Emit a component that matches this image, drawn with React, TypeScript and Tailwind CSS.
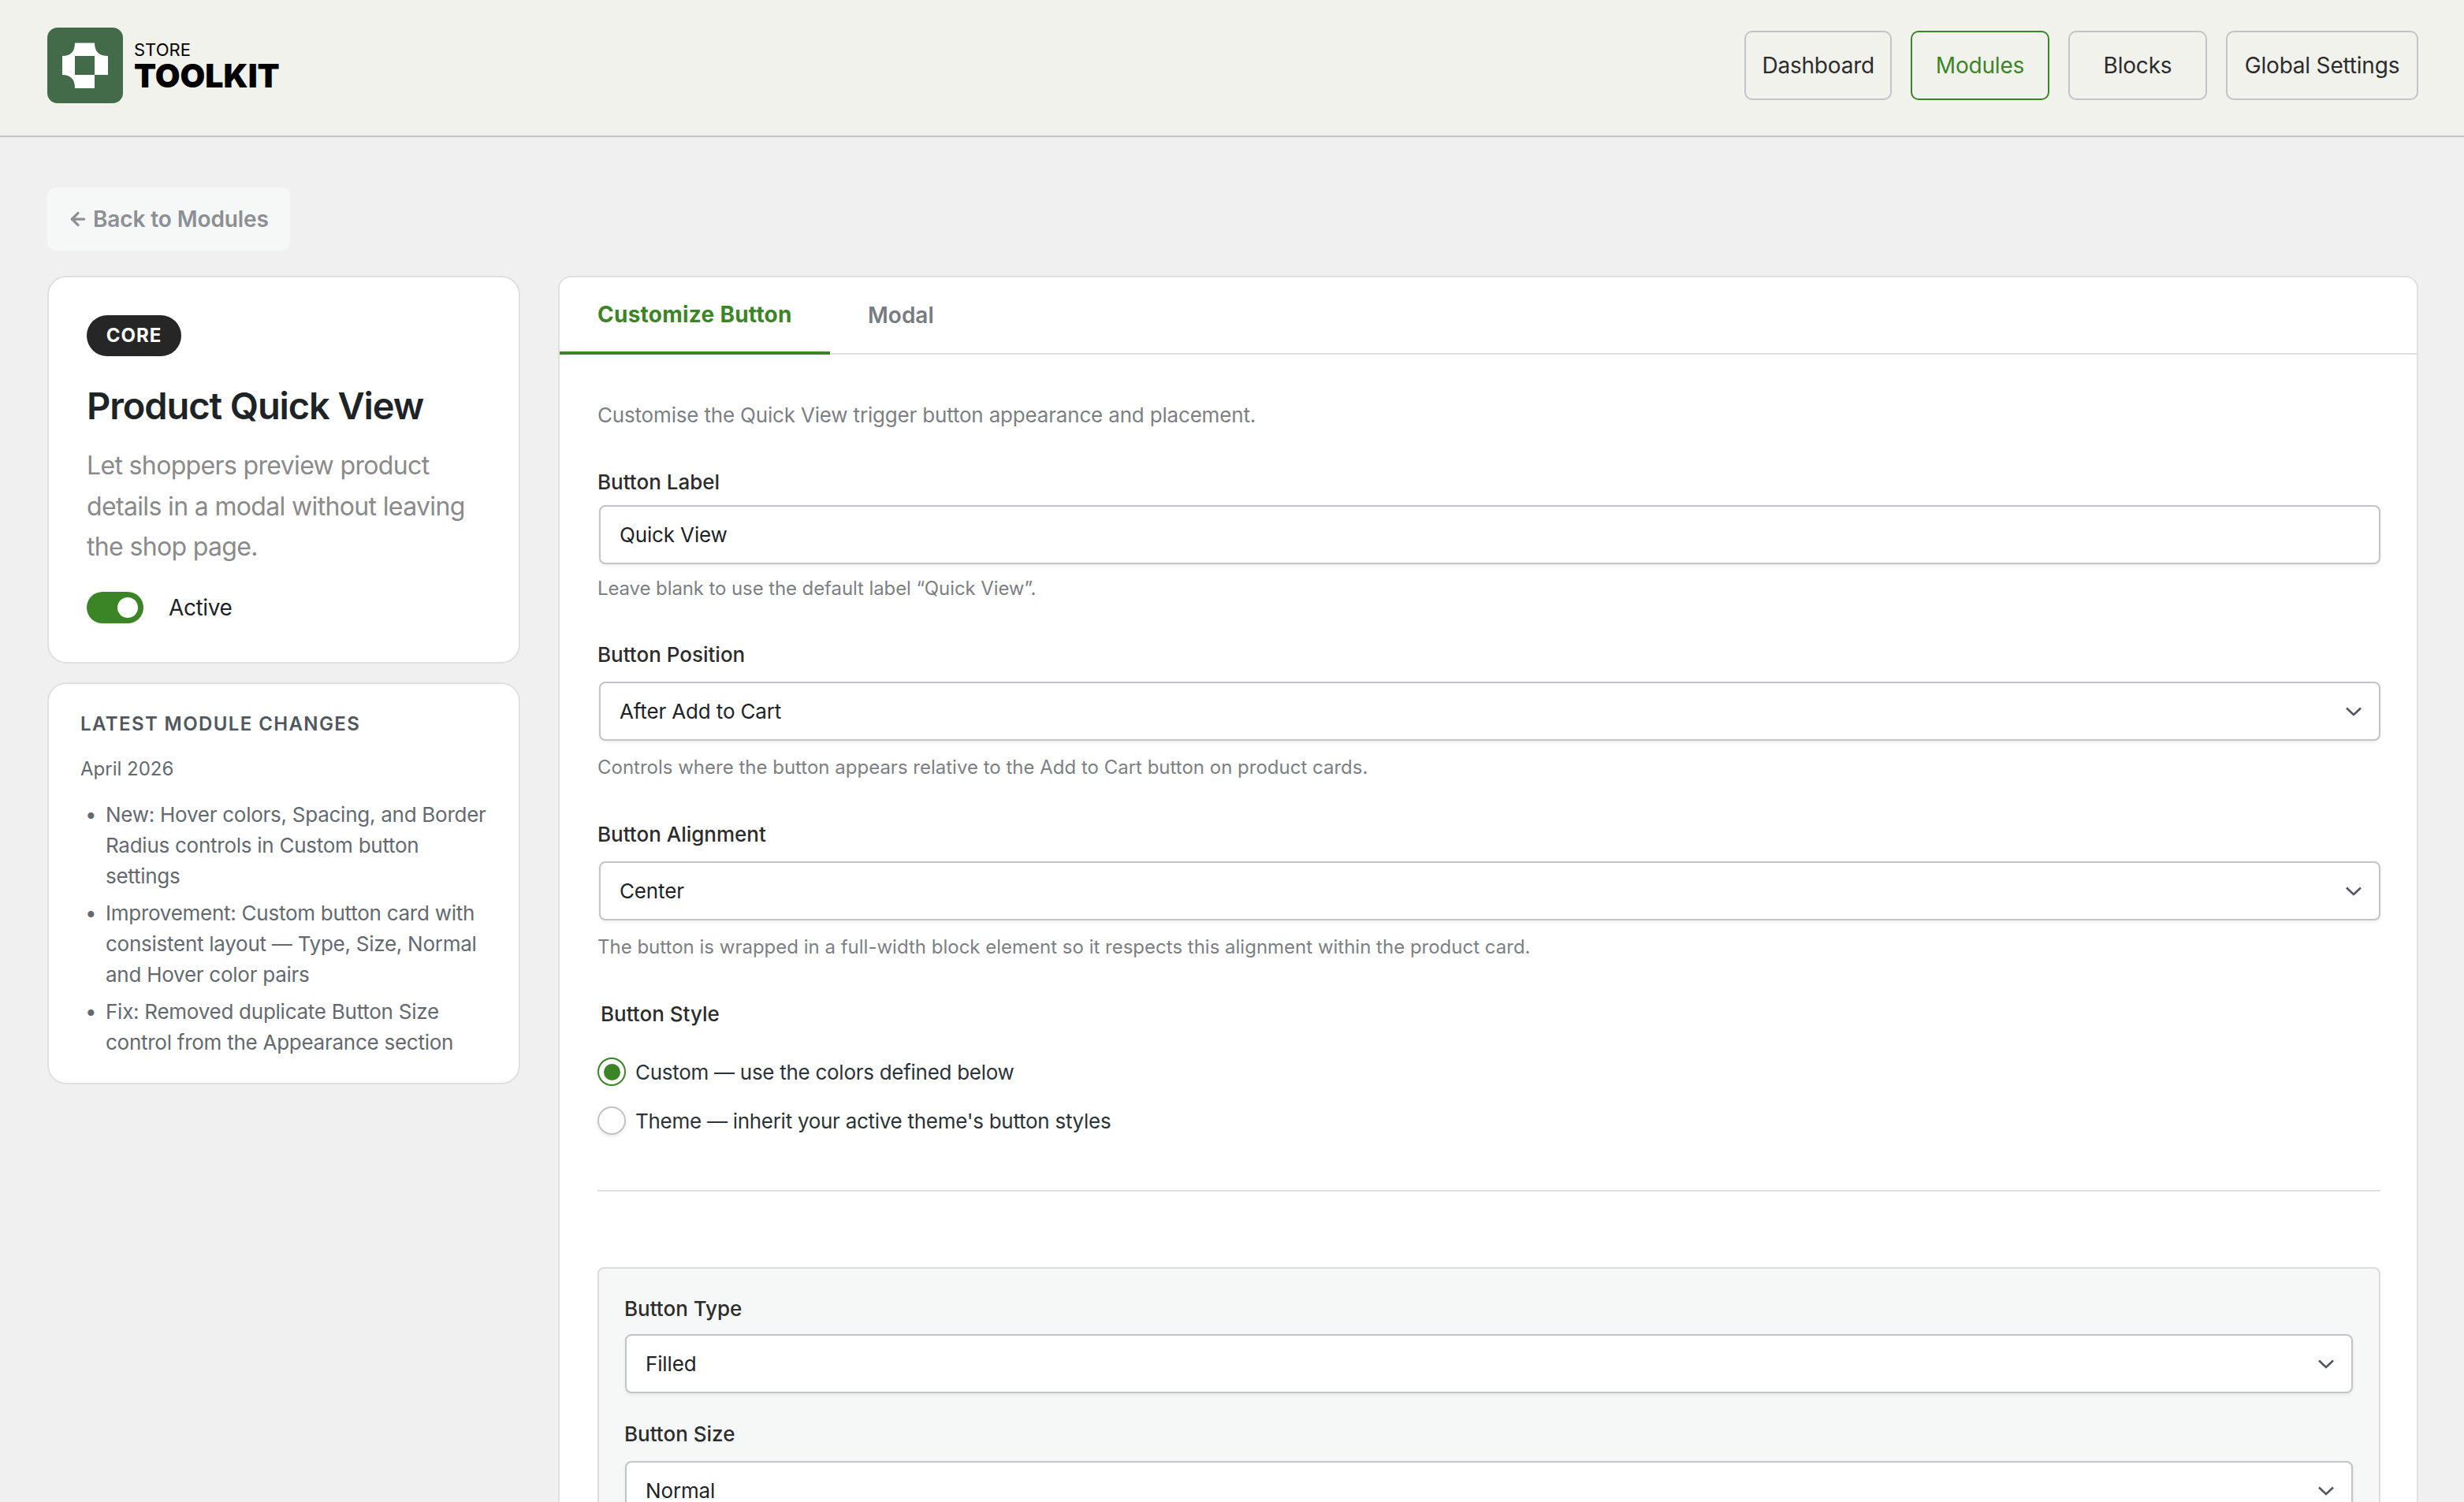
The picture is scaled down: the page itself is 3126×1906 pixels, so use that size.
import { ArrowLeft } from "lucide-react";

function LogoMark() {
  return (
    <svg width="96" height="96" viewBox="0 0 96 96" className="shrink-0">
      <rect width="96" height="96" rx="13" fill="#436b49" />
      <path
        fillRule="evenodd"
        fill="#fff"
        d="M35 19.5H60Q60 36 77 36V60H60V77H35Q35 60 19 60V36Q35 36 35 19.5ZM35 36V60H60V36Z"
      />
    </svg>
  );
}

function Chevron() {
  return (
    <svg width="20" height="12" viewBox="0 0 20 12" fill="none" className="shrink-0">
      <path d="M1 1.5L10 10L19 1.5" stroke="#50575e" strokeWidth="2.6" />
    </svg>
  );
}

function NavButton({ label, active, wide }: { label: string; active?: boolean; wide?: boolean }) {
  return (
    <a
      className={
        (active ? "border-[#3c8527] text-[#3c8527] " : "border-[#c3c4c7] text-[#2c2c2c] ") +
        (wide ? "min-w-[244px] " : "min-w-[176px] ") +
        "flex h-[88px] items-center justify-center rounded-[10px] border-2 px-[20px] text-[28px] tracking-[-0.2px]"
      }
    >
      {label}
    </a>
  );
}

function Field({ value, select }: { value: string; select?: boolean }) {
  return (
    <div className="flex h-[75px] items-center justify-between rounded-[8px] border-2 border-[#c3c4c7] bg-white pl-[24px] pr-[22px] text-[26px] tracking-[-0.15px] text-[#1d2327] shadow-[0_2px_4px_rgba(0,0,0,0.07)]">
      <span>{value}</span>
      {select && <Chevron />}
    </div>
  );
}

function Label({ children, className }: { children: string; className?: string }) {
  return <div className={"text-[26px] leading-[36px] font-medium text-[#2c2c2c] " + (className ?? "")}>{children}</div>;
}

function Help({ children, className }: { children: string; className?: string }) {
  return <p className={"text-[24px] leading-[36px] text-[#7c7f84] " + (className ?? "")}>{children}</p>;
}

const changes = [
  ["New: Hover colors, Spacing, and Border", "Radius controls in Custom button", "settings"],
  ["Improvement: Custom button card with", "consistent layout — Type, Size, Normal", "and Hover color pairs"],
  ["Fix: Removed duplicate Button Size", "control from the Appearance section"],
];

export default function App() {
  return (
    <div className="h-[1906px] overflow-hidden bg-[#f0f0f1] font-[Inter,sans-serif]">
      <header className="flex h-[174px] items-center justify-between border-b-2 border-[#c3c4c7] bg-[#f1f2ec] pb-[7px] pl-[60px] pr-[58px]">
        <div className="flex items-center gap-[14px]">
          <LogoMark />
          <div className="text-black">
            <div className="mb-[5px] text-[22px] leading-[22px]">STORE</div>
            <div className="text-[41px] leading-[34px] font-black">TOOLKIT</div>
          </div>
        </div>
        <nav className="flex gap-[24px]">
          <NavButton label="Dashboard" />
          <NavButton label="Modules" active />
          <NavButton label="Blocks" />
          <NavButton label="Global Settings" wide />
        </nav>
      </header>

      <main className="pl-[60px] pr-[58px] pt-[64px]">
        <a className="inline-flex h-[80px] w-[308px] items-center gap-[6px] rounded-[10px] bg-[#f6f7f7] pl-[26px] text-[28px] font-semibold tracking-[-0.1px] text-[#8c8f94]">
          <ArrowLeft size={26} strokeWidth={3} />
          Back to Modules
        </a>

        <div className="mt-[32px] flex items-start gap-[48px]">
          <aside className="flex w-[600px] shrink-0 flex-col gap-[24px]">
            <section className="h-[492px] rounded-[24px] border-2 border-[#e0e0e0] bg-white pl-[48px] pr-[40px] pt-[48px]">
              <span className="inline-flex h-[52px] w-[120px] items-center justify-center rounded-full bg-[#262626] text-[24px] font-bold tracking-[1px] text-white">
                CORE
              </span>
              <h1 className="mt-[34px] text-[47px] leading-[58px] font-semibold tracking-[-1.1px] text-[#1d2327]">
                Product Quick View
              </h1>
              <p className="mt-[21px] text-[32px] leading-[51.5px] tracking-[-0.65px] text-[#8a8a8a]">
                Let shoppers preview product details in a modal without leaving the shop page.
              </p>
              <div className="mt-[30px] flex items-center gap-[32px]">
                <span className="flex h-[40px] w-[72px] items-center justify-end rounded-full bg-[#3c8527] pr-[7px]">
                  <span className="h-[26px] w-[26px] rounded-full bg-white" />
                </span>
                <span className="text-[28px] tracking-[-0.4px] text-[#1d2327]">Active</span>
              </div>
            </section>

            <section className="h-[510px] rounded-[24px] border-2 border-[#e0e0e0] bg-white pl-[40px] pr-[24px] pt-[33px]">
              <h2 className="text-[24px] leading-[36px] font-semibold tracking-[1.4px] text-[#50575e]">LATEST MODULE CHANGES</h2>
              <p className="mt-[21px] text-[24px] leading-[36px] text-[#646970]">April 2026</p>
              <ul className="mt-[20px] flex flex-col gap-[8px]">
                {changes.map((lines) => (
                  <li key={lines[0]} className="flex text-[26px] leading-[39px] tracking-[-0.26px] text-[#646970]">
                    <span className="w-[32px] shrink-0 pl-[6px]">•</span>
                    <span>
                      {lines.map((line) => (
                        <span key={line} className="block whitespace-nowrap">
                          {line}
                        </span>
                      ))}
                    </span>
                  </li>
                ))}
              </ul>
            </section>
          </aside>

          <section className="min-w-0 flex-1 rounded-t-[16px] border-x-2 border-t-2 border-[#e0e0e0] bg-white">
            <div className="flex h-[98px] border-b-2 border-[#e0e0e0]">
              <div className="-mb-[2px] flex w-[343px] items-center border-b-4 border-[#3c8527] pl-[48px] text-[28px] font-bold tracking-[0.25px] text-[#3c8527]">
                Customize Button
              </div>
              <div className="flex items-center px-[48px] text-[28px] font-semibold text-[#787c82]">Modal</div>
            </div>

            <div className="pb-[200px] pl-[48px] pr-[46px]">
              <p className="mt-[57px] text-[26px] leading-[40px] tracking-[-0.18px] text-[#7c7f84]">
                Customise the Quick View trigger button appearance and placement.
              </p>

              <Label className="mt-[47px]">Button Label</Label>
              <div className="ml-[2px] mt-[11px]">
                <Field value="Quick View" />
              </div>
              <Help className="mt-[13px] tracking-[-0.1px]">Leave blank to use the default label “Quick View”.</Help>

              <Label className="mt-[48px]">Button Position</Label>
              <div className="ml-[2px] mt-[16px]">
                <Field value="After Add to Cart" select />
              </div>
              <Help className="mt-[16px]">Controls where the button appears relative to the Add to Cart button on product cards.</Help>

              <Label className="mt-[49px]">Button Alignment</Label>
              <div className="ml-[2px] mt-[16px]">
                <Field value="Center" select />
              </div>
              <Help className="mt-[16px]">
                The button is wrapped in a full-width block element so it respects this alignment within the product card.
              </Help>

              <Label className="ml-[4px] mt-[49px]">Button Style</Label>
              <div className="mt-[37px] flex h-[36px] items-center gap-[12px] text-[26px] tracking-[-0.28px] text-[#2c3338]">
                <span className="flex h-[36px] w-[36px] items-center justify-center rounded-full border-2 border-[#3c8527] bg-white">
                  <span className="h-[21px] w-[21px] rounded-full bg-[#3c8527]" />
                </span>
                Custom — use the colors defined below
              </div>
              <div className="mt-[26px] flex h-[36px] items-center gap-[12px] text-[26px] tracking-[-0.28px] text-[#2c3338]">
                <span className="h-[36px] w-[36px] rounded-full border-2 border-[#c3c4c7] bg-white shadow-[0_2px_4px_rgba(0,0,0,0.1)]" />
                Theme — inherit your active theme's button styles
              </div>

              <hr className="mt-[70px] border-t-2 border-[#e0e0e0]" />

              <div className="mt-[96px] rounded-[8px] border-2 border-[#dcdcde] bg-[#f6f7f7] pb-[40px] pl-[32px] pr-[33px] pt-[33px]">
                <Label>Button Type</Label>
                <div className="ml-[1px] mt-[14px]">
                  <Field value="Filled" select />
                </div>
                <Label className="mt-[34px]">Button Size</Label>
                <div className="ml-[1px] mt-[16px]">
                  <Field value="Normal" select />
                </div>
              </div>
            </div>
          </section>
        </div>
      </main>
    </div>
  );
}
